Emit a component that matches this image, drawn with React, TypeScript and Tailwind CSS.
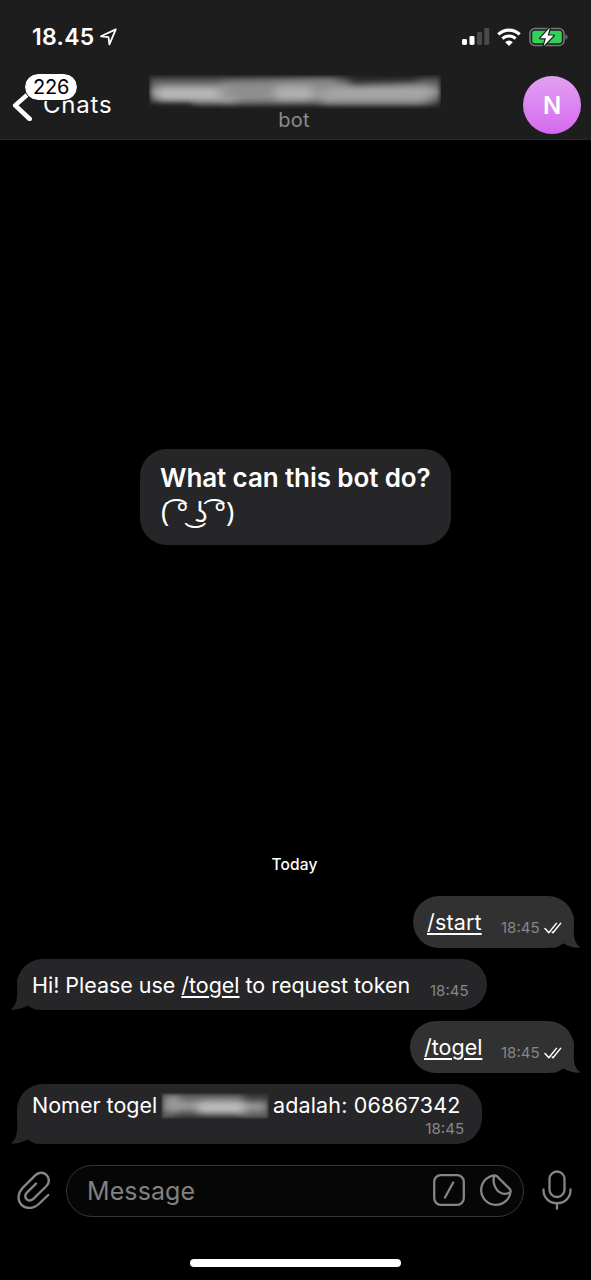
import type { ReactNode } from "react";

function Tail({ side }: { side: "in" | "out" }) {
  return (
    <svg
      className={
        side === "in"
          ? "absolute bottom-0 -left-[7px] h-8 w-9 fill-[#262628]"
          : "absolute -right-[7px] bottom-0 h-8 w-9 -scale-x-100 fill-[#313131]"
      }
      viewBox="0 0 36 32"
    >
      <path d="M7.3 0V13C7.3 22 6 27 1.6 30.6Q.8 31.8 2 31.8C8 31.6 13.5 30 18 27.2Q22.5 31.2 28 31.9L36 20V0Z" />
    </svg>
  );
}

function Checks() {
  return (
    <svg className="h-3 w-[18px] fill-none stroke-white" viewBox="0 0 18 12" strokeWidth="1.5" strokeLinecap="round" strokeLinejoin="round">
      <path d="M1 6.6L4.8 10.8L12.4 1.4M8.2 10L9 10.8L16.6 1.4" />
    </svg>
  );
}

function Time({ className = "", children }: { className?: string; children?: ReactNode }) {
  return (
    <span className={`flex items-center text-[15px] leading-5 text-[#86868a] ${className}`}>
      18:45{children}
    </span>
  );
}

function Command({ children }: { children: string }) {
  return <span className="underline decoration-[1.5px] underline-offset-[3px]">{children}</span>;
}

function StatusBar() {
  return (
    <div className="flex h-[72px] items-center justify-between pt-px pr-[23px] pl-8">
      <div className="flex items-center gap-[5px]">
        <span className="w-[63px] text-[23px] leading-7 font-semibold tracking-[0.3px] whitespace-nowrap">18.45</span>
        <svg className="h-[18px] w-[18px] fill-none stroke-white" viewBox="0 0 18 18" strokeWidth="1.8" strokeLinejoin="round">
          <path d="M1 8.3L15.8 1.4L9.4 16.4L8.5 9.1Z" />
        </svg>
      </div>
      <div className="flex items-center">
        <svg className="h-[18px] w-7" viewBox="0 0 28 18">
          <rect x="0" y="11" width="5" height="6" rx="1.4" fill="white" />
          <rect x="7.5" y="8" width="5" height="9" rx="1.4" fill="white" />
          <rect x="15" y="4" width="5" height="13" rx="1.4" fill="#4a4a4a" />
          <rect x="22.3" y="0" width="5" height="17" rx="1.4" fill="#4a4a4a" />
        </svg>
        <svg className="ml-[7px] h-[18px] w-6" viewBox="0 0 24 18">
          <path d="M1.3 6.4A15.3 15.3 0 0 1 22.7 6.4" fill="none" stroke="white" strokeWidth="3.2" />
          <path d="M5.4 10.6A9.4 9.4 0 0 1 18.6 10.6" fill="none" stroke="white" strokeWidth="3" />
          <path d="M12 18L8.2 14.2A5.3 5.3 0 0 1 15.8 14.2Z" fill="white" />
        </svg>
        <svg className="ml-2 h-5 w-[39px]" viewBox="0 0 39 20">
          <rect x="1" y="1.5" width="34" height="17" rx="5" fill="none" stroke="#77777a" strokeWidth="1.5" />
          <rect x="3.2" y="3.7" width="29.6" height="12.6" rx="2.8" fill="#32d158" />
          <path d="M36.5 7.2Q38.5 8.2 38.5 10T36.5 12.8Z" fill="#77777a" />
          <path d="M20.8 .8L11.3 11.2H17L14.6 19L24.6 8.6H18.7Z" fill="white" stroke="#1d1d1d" strokeWidth="2.4" strokeLinejoin="round" paintOrder="stroke" />
        </svg>
      </div>
    </div>
  );
}

function Header() {
  return (
    <header className="h-[140px] border-b border-[#252525] bg-[#1d1d1d]">
      <StatusBar />
      <div className="grid grid-cols-[149px_292px_1fr]">
        <div className="relative flex h-[66px] items-center pl-3">
          <svg className="h-8 w-[21px] fill-none stroke-white" viewBox="0 0 21 32" strokeWidth="4.6" strokeLinecap="round" strokeLinejoin="round">
            <path d="M17.7 3.6L3.2 16.4L17.7 30" />
          </svg>
          <span className="ml-[10px] text-[24px] leading-7 tracking-[0.8px]">Chats</span>
          <span className="absolute top-0.5 left-[25px] flex h-[26px] w-[52px] items-center justify-center rounded-full bg-white text-[20px] tracking-[-0.2px] text-black outline-1 outline-[#1d1d1d]">
            226
          </span>
        </div>
        <div className="pt-[3px] text-center">
          <div className="relative h-[34px] overflow-hidden bg-linear-to-b from-[#3c3c3c] via-[#7c7c7c] to-[#222222]">
            <div className="absolute top-[13px] left-1 h-2.5 w-[284px] rounded-full bg-[#b5b5b5] blur-[6px]" />
            <div className="absolute top-[15px] left-2 h-2.5 w-[80px] rounded-full bg-[#c0c0c0] blur-[5px]" />
            <div className="absolute top-1.5 left-[70px] h-4 w-[120px] -rotate-3 rounded-full bg-[#8c8c8c] blur-[6px]" />
            <div className="absolute top-[13px] left-[125px] h-2.5 w-[40px] rounded-full bg-[#bbbbbb] blur-[5px]" />
            <div className="absolute top-[15px] left-[170px] h-3 w-[110px] rounded-full bg-[#aaaaaa] blur-[6px]" />
            <div className="absolute -top-1 left-[200px] h-2.5 w-[70px] -rotate-3 rounded-full bg-[#202020] blur-[4px]" />
            <div className="absolute top-[29px] -left-1 h-2 w-12 rounded-full bg-[#1d1d1d] blur-[3px]" />
            <div className="absolute inset-0 shadow-[inset_0_0_4px_1px_#1d1d1d]" />
          </div>
          <div className="-mt-px pr-0.5 text-[20px] leading-6 tracking-[0.2px] text-[#8b8b8b]">bot</div>
        </div>
        <div className="flex justify-end pt-1 pr-2.5">
          <div className="flex size-[58px] items-center justify-center rounded-full bg-linear-to-b from-[#e2a0f2] to-[#d568ef] pt-0.5 text-[24px] font-semibold">
            <span>N</span>
          </div>
        </div>
      </div>
    </header>
  );
}

function Composer() {
  return (
    <footer className="mt-[21px] flex h-[52px] items-center">
      <svg className="mb-0.5 ml-[17px] h-[38px] w-[34px] fill-none stroke-[#858585]" viewBox="0 0 34 38" strokeWidth="2.4" strokeLinecap="round" strokeLinejoin="round">
        <path d="M31.2 24L21.8 33C16.6 38 8.8 38.2 4.5 33.8C.2 29.5.7 22.3 5.4 17.2L18.2 4.3C21.4 1 26.4.8 29.4 3.8C32.5 6.9 32.7 11.6 29.5 15L16.6 27.6C14.5 29.7 11.4 30.2 9.6 28.2C7.8 26.3 8 23.7 10.1 21.4L19 12.6" />
      </svg>
      <div className="ml-[15px] flex h-[52px] w-[458px] items-center rounded-full border-[1.5px] border-[#363636] bg-[#060606] pr-[11px] pl-5">
        <span className="mb-px flex-1 text-[25px] leading-8 tracking-[0.1px] text-[#808080]">Message</span>
        <svg className="mb-0.5 size-8 fill-none stroke-[#858585]" viewBox="0 0 32 32" strokeWidth="2.3" strokeLinecap="round">
          <rect x="1.2" y="1.2" width="29.6" height="29.6" rx="6.5" />
          <path d="M20.2 8.5L12 23.5" />
        </svg>
        <svg className="mb-0.5 ml-[15px] size-8 fill-none stroke-[#858585]" viewBox="0 0 32 32" strokeWidth="2.3" strokeLinejoin="round">
          <path d="M14.5 1.3A14.8 14.8 0 1 0 30.7 17.5Q30.7 16 29.6 14.9L17.1 2.4Q16 1.3 14.5 1.3C11.5 9 16.5 19.8 25 19.8Q29.3 19.8 30.7 17.5" />
        </svg>
      </div>
      <svg className="mb-0.5 ml-[18px] h-10 w-[30px] fill-none stroke-[#858585]" viewBox="0 0 30 40" strokeWidth="2.3" strokeLinecap="round">
        <rect x="7.5" y="1.5" width="15" height="25.5" rx="7.5" />
        <path d="M1.5 19.5V20C1.5 28 7.5 33.2 15 33.2S28.5 28 28.5 20V19.5M15 33.5V38.7" />
      </svg>
    </footer>
  );
}

export default function App() {
  return (
    <div className="flex h-[1280px] w-[591px] flex-col overflow-hidden bg-black font-['Inter','Liberation_Sans',sans-serif] text-white">
      <Header />

      <main className="flex flex-col">
        <section className="mt-[309px] ml-[140px] h-24 w-[311px] rounded-[27px] bg-[#262628] px-5 pt-[11px] whitespace-nowrap">
          <h1 className="text-[26px] leading-9 font-semibold tracking-[-0.1px]">What can this bot do?</h1>
          <p className="-mt-0.5 pl-px font-['Noto_Sans',sans-serif] text-[27.5px] leading-9">( ͡° ͜ʖ ͡°)</p>
        </section>

        <div className="mt-[310px] h-5 pr-0.5 text-center text-[15.5px] leading-5 font-medium tracking-[0.1px]">Today</div>

        <div className="mt-[21px] flex flex-col text-[21.5px] leading-7 whitespace-nowrap">
          <div className="relative mr-[17px] flex h-[52px] w-[161px] items-center self-end rounded-[26px] bg-[#313131] pl-3.5">
            <Tail side="out" />
            <div className="relative flex w-[74px] tracking-[0.15px]"><Command>/start</Command></div>
            <Time className="relative mt-3"><span className="ml-1 flex"><Checks /></span></Time>
          </div>
          <div className="relative mt-[11px] ml-[17px] flex h-[51px] w-[470px] items-center rounded-[26px] bg-[#262628] pl-[15px]">
            <Tail side="in" />
            <p className="relative w-[398px] tracking-[-0.03px]">Hi! Please use <Command>/togel</Command> to request token</p>
            <Time className="mt-3" />
          </div>
          <div className="relative mt-[11px] mr-[17px] flex h-[52px] w-[164px] items-center self-end rounded-[26px] bg-[#313131] pl-3.5">
            <Tail side="out" />
            <div className="relative flex w-[77px]"><Command>/togel</Command></div>
            <Time className="relative mt-3"><span className="ml-1 flex"><Checks /></span></Time>
          </div>
          <div className="relative mt-[11px] ml-[17px] h-[60px] w-[465px] rounded-[26px] bg-[#262628] pt-[7px] pl-[15px]">
            <Tail side="in" />
            <div className="relative flex">
              <span className="w-[129px]">Nomer togel</span>
              <div className="relative mt-[2px] h-[26px] w-[108px] overflow-hidden bg-[#555557]">
                <div className="absolute top-2 left-1 h-2.5 w-[102px] rounded-full bg-[#a8a8a8] blur-[4px]" />
                <div className="absolute top-0.5 left-1 h-4 w-4 rounded-full bg-[#999999] blur-[4px]" />
                <div className="absolute top-2.5 left-9 h-3 w-12 rounded-full bg-[#c4c4c4] blur-[4px]" />
                <div className="absolute -top-1 left-[82px] h-2.5 w-8 rounded-full bg-[#303032] blur-[4px]" />
                <div className="absolute top-[23px] left-3 h-2 w-[70px] rounded-full bg-[#303032] blur-[4px]" />
                <div className="absolute inset-0 shadow-[inset_0_0_3px_1px_#262628]" />
              </div>
              <span className="ml-1 tracking-[0.15px]">adalah: 06867342</span>
            </div>
            <Time className="mr-[18px] -mt-px justify-end pt-px" />
          </div>
        </div>
      </main>

      <Composer />
      <div className="mt-[42px] ml-[190px] h-2 w-[211px] rounded-full bg-white" />
    </div>
  );
}
